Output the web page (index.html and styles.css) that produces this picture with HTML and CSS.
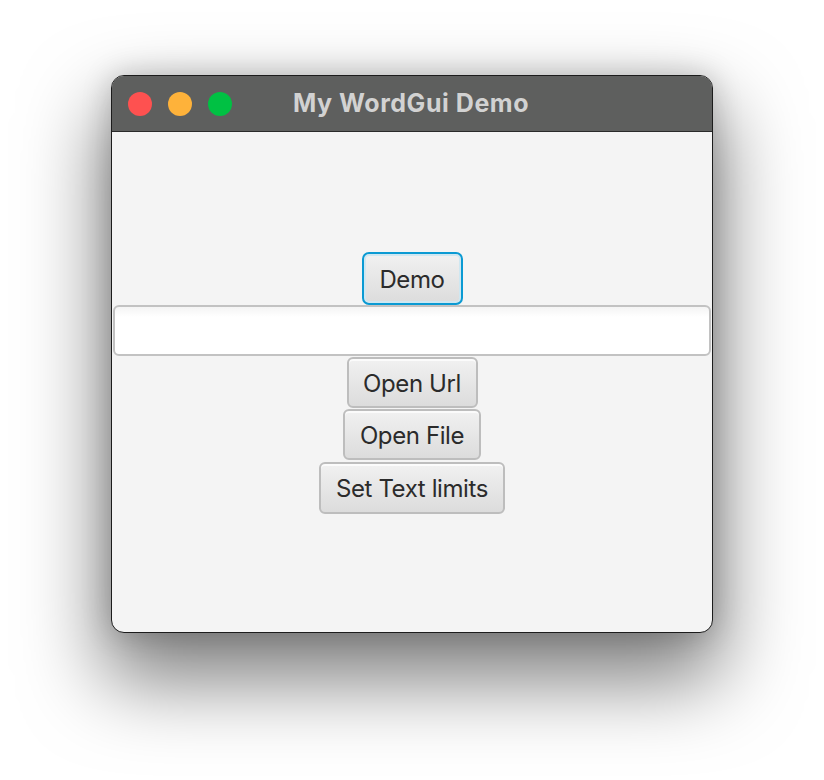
FILE: index.html
```html
<!DOCTYPE html>
<html lang="en">
<head>
<meta charset="utf-8">
<title>My WordGui Demo</title>
<link rel="stylesheet" href="styles.css">
</head>
<body>
<div class="window">
  <div class="titlebar">
    <div class="lights">
      <span class="light red"></span>
      <span class="light yellow"></span>
      <span class="light green"></span>
    </div>
    <div class="title">My WordGui Demo</div>
  </div>
  <div class="content">
    <button class="btn focused">Demo</button>
    <div class="field"></div>
    <button class="btn w-url">Open Url</button>
    <button class="btn w-file">Open File</button>
    <button class="btn w-limits">Set Text limits</button>
  </div>
</div>
</body>
</html>
```

FILE: styles.css
```css
html, body {
  margin: 0;
  padding: 0;
  background: #ffffff;
}
body {
  width: 824px;
  height: 780px;
  overflow: hidden;
  padding-top: 75px;
  padding-left: 111px;
  box-sizing: border-box;
  font-family: Inter, "Liberation Sans", sans-serif;
}
.window {
  width: 602px;
  height: 558px;
  box-sizing: border-box;
  border: 1px solid #1c1c1c;
  border-radius: 13px;
  overflow: hidden;
  background: #f4f4f4;
  display: flex;
  flex-direction: column;
  box-shadow: 0 40px 80px 8px rgba(0, 0, 0, 0.5), 0 0 30px rgba(0, 0, 0, 0.2);
}
.titlebar {
  height: 56px;
  flex: none;
  box-sizing: border-box;
  background: #5e5f5e;
  border-bottom: 1px solid #2a2a2a;
  display: flex;
  align-items: center;
  position: relative;
}
.lights {
  display: flex;
  gap: 16px;
  padding-left: 16px;
}
.light {
  width: 24px;
  height: 24px;
  border-radius: 50%;
  display: block;
}
.red { background: #fe5150; }
.yellow { background: #feb23a; }
.green { background: #00c143; }
.title {
  position: absolute;
  left: 0;
  right: 0;
  top: 0;
  bottom: 0;
  display: flex;
  align-items: center;
  justify-content: center;
  color: #d2d2d2;
  font-weight: 700;
  font-size: 25px;
  letter-spacing: 0.55px;
  padding-bottom: 1px;
  padding-right: 2px;
}
.content {
  flex: 1;
  display: flex;
  flex-direction: column;
  align-items: center;
  justify-content: center;
  padding-top: 1px;
}
.btn {
  font-family: Inter, "Liberation Sans", sans-serif;
  font-size: 24px;
  letter-spacing: -0.4px;
  color: #2b2b2b;
  height: 51px;
  box-sizing: border-box;
  border: 2px solid #bdbdbd;
  border-radius: 6px;
  background: linear-gradient(#f1f1f1, #dcdcdc);
  box-shadow: inset 0 2px 0 rgba(255,255,255,0.7);
  padding: 2px 10px 0;
  margin: 1px 0 0 0;
  display: flex;
  align-items: center;
  justify-content: center;
}
.btn.focused {
  width: 101px;
  height: 53px;
  margin: 0;
  border: 2px solid #0a9ad3;
  border-radius: 7px;
  box-shadow: inset 0 0 0 2px #cfe7f1;
}
.field {
  width: 598px;
  height: 51px;
  box-sizing: border-box;
  border: 2px solid #c2c2c2;
  border-radius: 6px;
  background: linear-gradient(#f4f4f4, #ffffff 10px);
}
.w-url { width: 131px; }
.w-file { width: 138px; }
.w-limits { width: 186px; height: 52px; margin-top: 2px; }
```
